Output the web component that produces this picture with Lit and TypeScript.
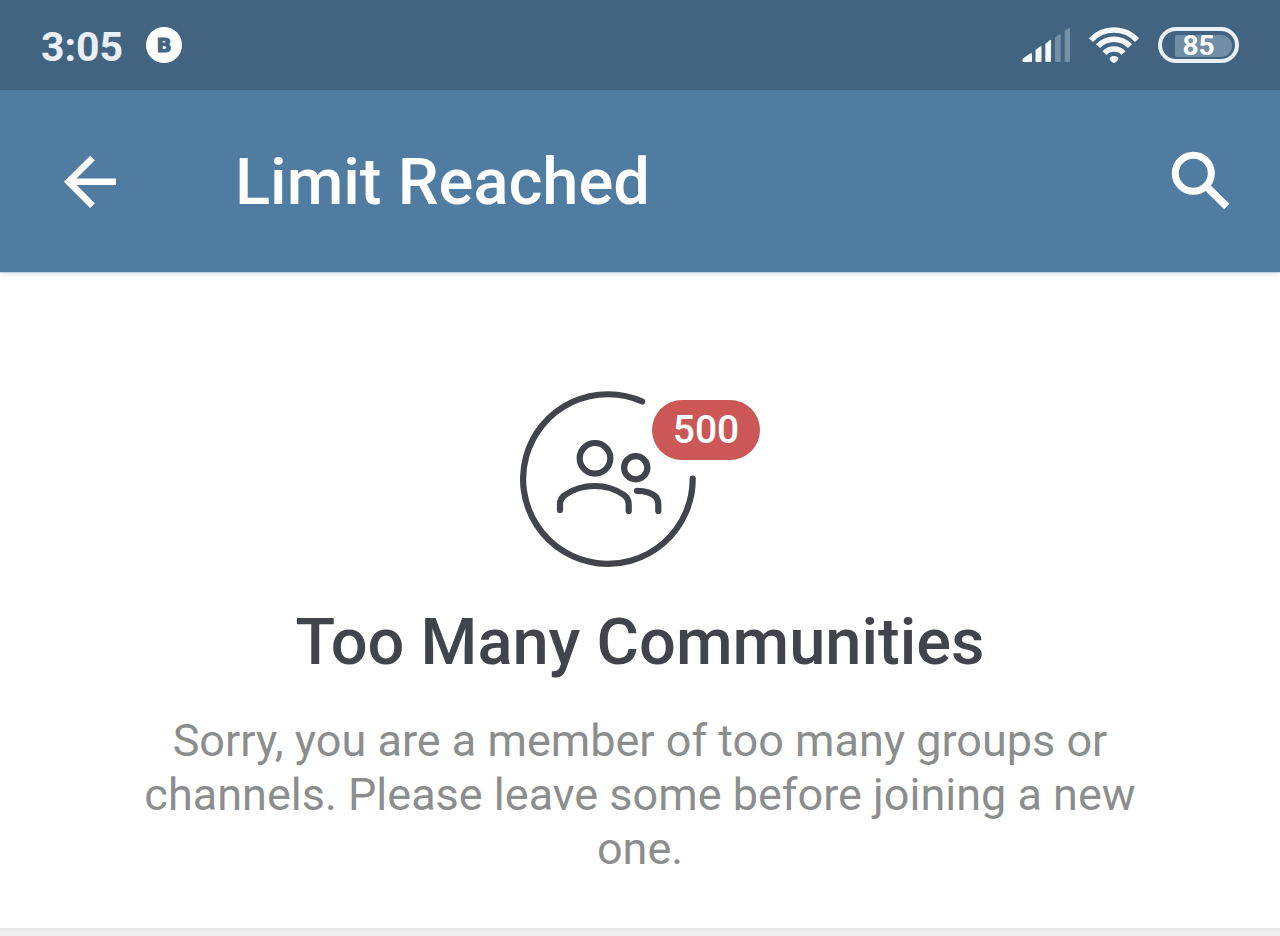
import { LitElement, html, css } from "lit";
import { customElement, property } from "lit/decorators.js";

@customElement("status-bar")
class StatusBar extends LitElement {
  @property() time = "3:05";
  @property({ type: Number }) battery = 85;

  static styles = css`
    :host {
      position: relative;
      z-index: 1;
      display: flex;
      align-items: center;
      justify-content: space-between;
      box-sizing: border-box;
      height: 90px;
      padding: 0 41px;
      background: #426481;
      color: #e9f0f7;
    }
    .group {
      display: flex;
      align-items: center;
      gap: 19px;
    }
    .clock {
      gap: 23px;
    }
    .time {
      font-size: 41px;
      line-height: 48px;
      font-weight: 700;
      padding-top: 4px;
    }
    .app {
      display: grid;
      place-items: center;
      width: 36px;
      height: 36px;
      border-radius: 50%;
      background: #fff;
      color: #426481;
      font-family: "DejaVu Sans", sans-serif;
      font-size: 20px;
      line-height: 36px;
      font-weight: 700;
      -webkit-text-stroke: 1px #426481;
    }
    svg {
      display: block;
    }
    .battery {
      display: grid;
      place-items: center;
      box-sizing: border-box;
      width: 81px;
      height: 36px;
      border: 4px solid #e9f0f7;
      border-radius: 18px;
      font-size: 28px;
      line-height: 30px;
      font-weight: 700;
      color: #fff;
    }
    .level,
    .value {
      grid-area: 1 / 1;
    }
    .level {
      justify-self: end;
      width: 57px;
      height: 22px;
      margin-right: 3px;
      border-radius: 2px 11px 11px 2px;
      background: #708ea5;
    }
  `;

  render() {
    return html`
      <div class="group clock">
        <span class="time">${this.time}</span>
        <span class="app">B</span>
      </div>
      <div class="group">
        <svg width="48" height="36" viewBox="0 0 48 36" fill="#f4f8fb" aria-label="Signal">
          <path d="M1 31.500 8 26.500Q10 25.500 10 27V34Q10 35 9 35H1.500Q-.5 34.500 1 31.500Z" />
          <path d="M13.500 23 18 19.600Q19.500 18.700 19.500 20V34Q19.500 35 18.500 35H14.500Q13.500 35 13.500 34Z" />
          <path d="M23.300 17 27.500 13.500Q29 12.500 29 14V34Q29 35 28 35H24.300Q23.300 35 23.300 34Z" />
          <path fill="#748fa6" d="M33 10.500 37.200 7.400Q38.700 6.500 38.700 8V34Q38.700 35 37.700 35H34Q33 35 33 34Z" />
          <path fill="#748fa6" d="M42.700 4 46.700 1.100Q48 .3 48 1.500V34Q48 35 47 35H43.700Q42.700 35 42.700 34Z" />
        </svg>
        <svg width="50" height="36" viewBox="0 0 50 36" fill="none" stroke="#f4f8fb" stroke-width="5.6" aria-label="Wi-Fi">
          <path d="M2 13A31.500 31.500 0 0 1 48 13" />
          <path d="M9 19.200A22 22 0 0 1 41 19.200" />
          <path d="M15.500 26.200A13 13 0 0 1 34.500 26.200" />
          <path fill="#f4f8fb" stroke="none" d="M25 29C28 29 29.500 30.500 29.500 31.500 29.500 33 26.500 36 25 36S20.500 33 20.500 31.500C20.500 30.500 22 29 25 29Z" />
        </svg>
        <div class="battery">
          <span class="level"></span>
          <span class="value">${this.battery}</span>
        </div>
      </div>
    `;
  }
}

@customElement("title-bar")
class TitleBar extends LitElement {
  @property() heading = "";

  static styles = css`
    :host {
      display: flex;
      align-items: center;
      box-sizing: border-box;
      height: 182px;
      padding: 0 40px 0 50px;
      background: #507ca1;
      color: #fff;
      box-shadow: 0 1px 1px #c3d3e1, 0 2px 5px #dde3e5;
    }
    button {
      display: block;
      width: 80px;
      height: 80px;
      padding: 0;
      border: 0;
      background: none;
      color: inherit;
    }
    svg {
      display: block;
    }
    h1 {
      flex: 1;
      margin: 0;
      padding: 2px 0 0 105px;
      font-size: 65px;
      line-height: 78px;
      font-weight: 500;
    }
  `;

  render() {
    return html`
      <button aria-label="Back">
        <svg width="80" height="80" viewBox="0 0 80 80" fill="none" stroke="currentColor" stroke-width="6.6">
          <path d="M66 40.700H18" />
          <path d="M42.500 17 18.600 40.700 42.500 64.600" />
        </svg>
      </button>
      <h1>${this.heading}</h1>
      <button aria-label="Search">
        <svg width="80" height="80" viewBox="0 0 80 80" fill="none" stroke="currentColor">
          <circle cx="33.300" cy="32.300" r="18" stroke-width="7" />
          <path d="M48 47 66.800 65.500" stroke-width="7.400" />
        </svg>
      </button>
    `;
  }
}

@customElement("limit-notice")
class LimitNotice extends LitElement {
  @property({ type: Number }) count = 500;

  static styles = css`
    :host {
      display: flex;
      flex-direction: column;
      align-items: center;
      padding: 119px 128px 52px;
      text-align: center;
    }
    .figure {
      position: relative;
      width: 240px;
    }
    svg {
      display: block;
    }
    .badge {
      position: absolute;
      top: 9px;
      right: 0;
      width: 108px;
      border-radius: 30px;
      background: #cb5757;
      color: #fff;
      font-size: 39px;
      line-height: 60px;
      font-weight: 500;
    }
    h2 {
      margin: 36px 0 0;
      font-size: 65px;
      line-height: 78px;
      font-weight: 500;
      color: #42444b;
    }
    p {
      margin: 33px 0 0;
      font-size: 45px;
      line-height: 54px;
      color: #8c8e8e;
    }
  `;

  render() {
    return html`
      <div class="figure">
        <svg width="176" height="176" viewBox="0 0 176 176" fill="none" stroke="#42444b" stroke-width="6.2" stroke-linecap="round">
          <path d="M122.200 10.500A84.800 84.800 0 1 0 172.700 87.500" />
          <circle cx="75" cy="67.300" r="15.300" />
          <circle cx="115.700" cy="76.700" r="11.600" />
          <path d="M40 119V113.500Q40 107 45 104C62 92 87 92 104 104Q108.700 107.500 108.700 113.500V120" />
          <path d="M117 99.800C127 99.800 132 102 136 106Q138.300 109 138.300 114V120" />
        </svg>
        <span class="badge">${this.count}</span>
      </div>
      <h2>Too Many Communities</h2>
      <p>Sorry, you are a member of too many groups or channels. Please leave some before joining a new one.</p>
    `;
  }
}

@customElement("app-root")
class AppRoot extends LitElement {
  static styles = css`
    :host {
      display: flex;
      flex-direction: column;
      min-height: 100vh;
      background: #fff;
      font-family: Roboto, "Liberation Sans", sans-serif;
    }
    .list {
      flex: 1;
      min-height: 8px;
      background: linear-gradient(#e4e4e4, #f0f0f0 6px);
    }
  `;

  render() {
    return html`
      <status-bar></status-bar>
      <title-bar heading="Limit Reached"></title-bar>
      <limit-notice></limit-notice>
      <div class="list"></div>
    `;
  }
}
